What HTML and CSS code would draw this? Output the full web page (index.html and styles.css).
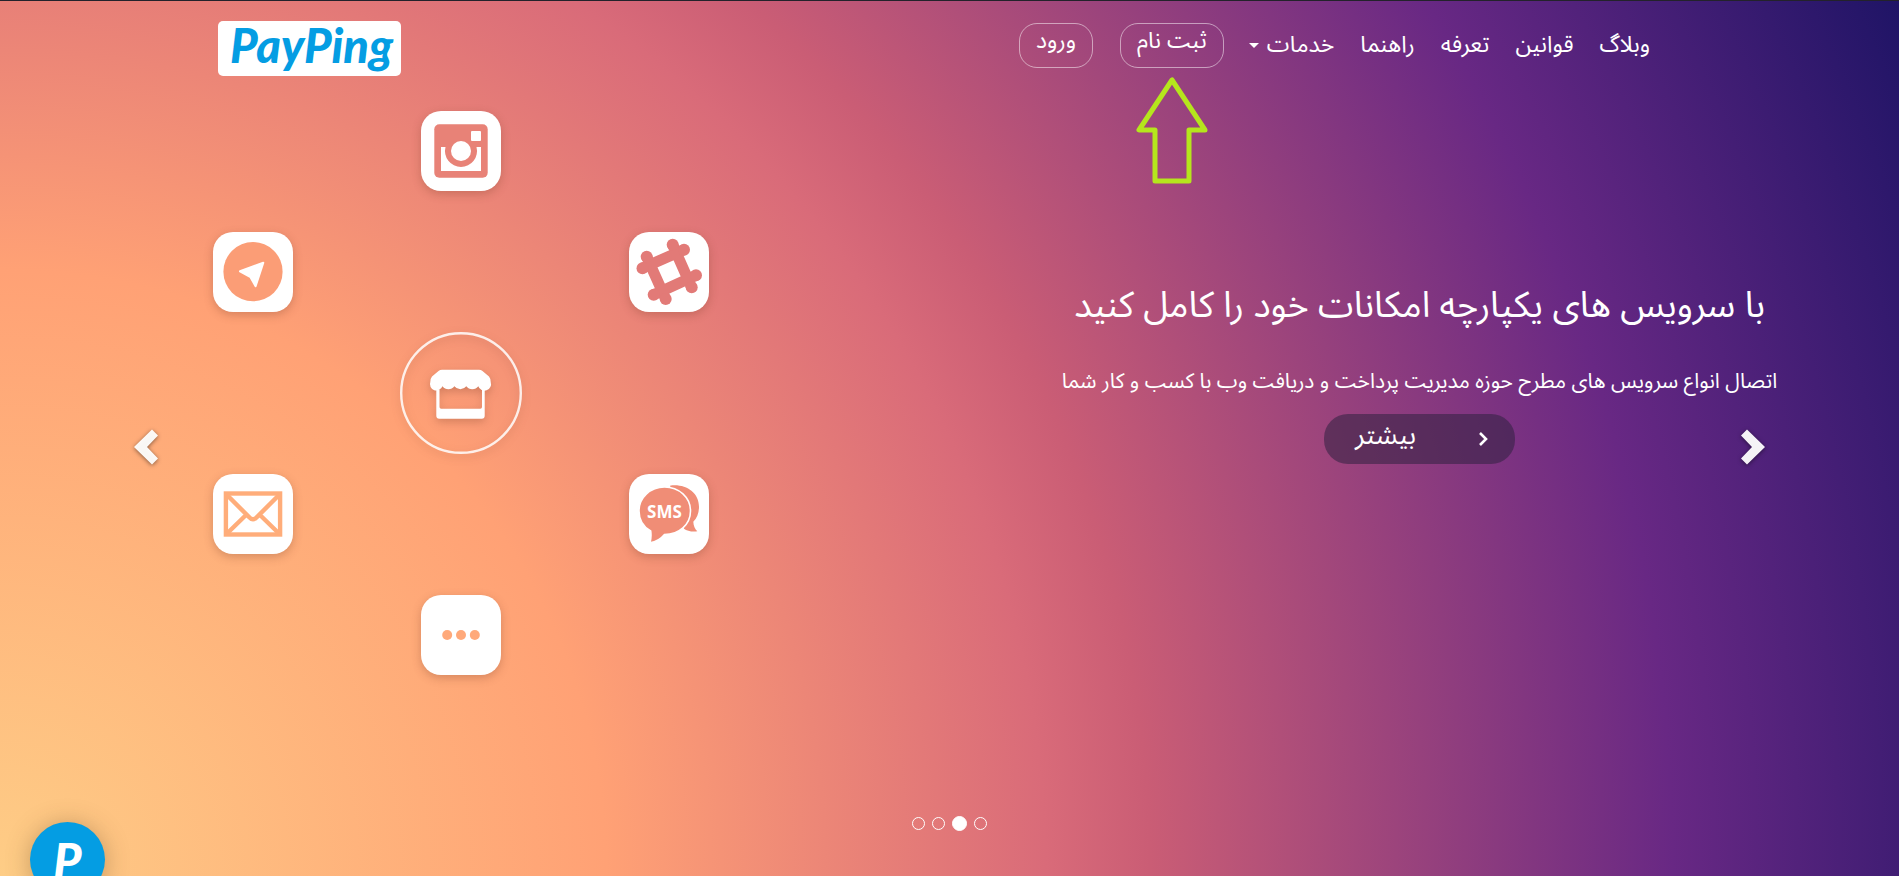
FILE: index.html
```html
<!DOCTYPE html>
<html lang="fa" dir="rtl">
<head>
<meta charset="utf-8">
<title>PayPing</title>
<link rel="stylesheet" href="styles.css">
</head>
<body>
<div class="page">
  <header class="header">
    <nav class="nav">
      <ul class="menu">
        <li><a href="#">وبلاگ</a></li>
        <li><a href="#">قوانین</a></li>
        <li><a href="#">تعرفه</a></li>
        <li><a href="#">راهنما</a></li>
        <li><a href="#" class="has-caret">خدمات<span class="caret"></span></a></li>
      </ul>
      <a href="#" class="pill register">ثبت نام
        <svg class="pointer" viewBox="0 0 72 108"><path d="M36 4L3 54H19V105H53V54H69Z" fill="none" stroke="#b5e61d" stroke-width="5" stroke-linejoin="round"/></svg>
      </a>
      <a href="#" class="pill">ورود</a>
    </nav>
    <a href="#" class="logo" dir="ltr">PayPing</a>
  </header>

  <main class="hero">
    <section class="copy">
      <h1>با سرویس های یکپارچه امکانات خود را کامل کنید</h1>
      <p>اتصال انواع سرویس های مطرح حوزه مدیریت پرداخت و دریافت وب با کسب و کار شما</p>
      <a href="#" class="more">
        <svg class="more-icon" viewBox="0 0 12 16"><path d="M3 2L9 8L3 14" fill="none" stroke="#fff" stroke-width="2.6"/></svg>
        <span>بیشتر</span>
      </a>
    </section>
    <section class="services">
      <div class="tile instagram">
        <svg viewBox="0 0 80 80"><rect x="13.3" y="13.3" width="53.4" height="53.4" rx="5" fill="#e88277"/><path d="M20 36H24.5A16 16 0 1 0 55.5 36H60V60H20Z" fill="#fff"/><circle cx="40" cy="40" r="10" fill="#fff"/><rect x="50" y="20" width="10" height="10" rx="1" fill="#fff"/></svg>
      </div>
      <div class="tile telegram">
        <svg viewBox="0 0 80 80"><circle cx="40" cy="39.7" r="29.6" fill="#fb9d76"/><path d="M27 39.3L50.3 30.7L42.6 54.3L37.5 45.2Z" fill="#fff" stroke="#fff" stroke-width="2" stroke-linejoin="round"/></svg>
      </div>
      <div class="tile slack">
        <svg viewBox="0 0 80 80"><g fill="none" stroke="#e27a77" stroke-width="11"><path d="M43.7 12.7L62.7 55.7M17.7 24.7L36.7 67M55 17.7L13 36.3M67.3 43.3L24.7 62.7"/></g><g fill="#e27a77"><circle cx="43.7" cy="12.7" r="6"/><circle cx="55" cy="17.7" r="6"/><circle cx="17.7" cy="24.7" r="6"/><circle cx="13.5" cy="36.3" r="6"/><circle cx="67" cy="43.3" r="6"/><circle cx="62.7" cy="55.3" r="6"/><circle cx="24.7" cy="62.7" r="6"/><circle cx="36.7" cy="67" r="6"/></g></svg>
      </div>
      <div class="shop">
        <svg viewBox="0 0 122 122"><circle cx="61" cy="61" r="59.8" fill="none" stroke="#fff" stroke-opacity=".85" stroke-width="2.4"/><path d="M42 37.7H79Q81 37.7 82.5 39L89 44.5Q90.7 46.5 90.7 50A6.4 6.4 0 0 1 78.3 54.2A7.5 7.5 0 0 1 66.3 54.2A7.5 7.5 0 0 1 54.4 54.2A7.5 7.5 0 0 1 42.4 54.2A6.4 6.4 0 0 1 30.3 50Q30.3 46.5 32 44.5L38.5 39Q40 37.7 42 37.7Z" fill="#fff"/><path d="M36.3 57.7H39.5V75Q39.5 76.7 41.2 76.7H80.3Q82 76.7 82 75V57.7H84.7V83.7Q84.7 86.7 81.7 86.7H39.3Q36.3 86.7 36.3 83.7Z" fill="#fff"/></svg>
      </div>
      <div class="tile mail">
        <svg viewBox="0 0 80 80"><g fill="none" stroke="#ffad7a" stroke-width="4.4"><rect x="12.9" y="19.5" width="54.2" height="41"/><path d="M14 21L36 43Q40 47.5 44 43L66 21M14 59.5L32.5 41.5M66 59.5L47.5 41.5"/></g></svg>
      </div>
      <div class="tile sms">
        <svg viewBox="0 0 80 80"><path d="M41 11.7C56 9.5 70 18 70 32.7C70 39 68 44 64.3 47.7C64.5 52 66 55 68.3 57.3C63 58 58 57 55 54.7Z" fill="#f08d76"/><path d="M35.5 13C50 13 61.5 23.5 61.5 37C61.5 50.5 50 60.6 35.5 60.6Q30 67.5 21 68.7Q22.5 63 21.7 57C14.5 53 10 46 10 37C10 23.5 21.5 13 35.5 13Z" fill="#f08d76" stroke="#fff" stroke-width="1.6"/><text x="35.5" y="43.5" text-anchor="middle" class="sms-label">SMS</text></svg>
      </div>
      <div class="tile dots">
        <svg viewBox="0 0 80 80"><g fill="#ffa97a"><circle cx="26.2" cy="40" r="5"/><circle cx="40" cy="40" r="5"/><circle cx="53.8" cy="40" r="5"/></g></svg>
      </div>
    </section>

    <button class="arrow arrow-left" aria-label="قبلی"><svg viewBox="0 0 24 36"><path d="M18 .5L24 6.5L13 18L24 29.5L18 35.5L0 18Z" fill="#fff" fill-opacity=".95"/></svg></button>
    <button class="arrow arrow-right" aria-label="بعدی"><svg viewBox="0 0 24 36"><path d="M6 .5L0 6.5L11 18L0 29.5L6 35.5L24 18Z" fill="#fff" fill-opacity=".95"/></svg></button>
  </main>

  <div class="indicators" dir="ltr">
    <button aria-label="1"></button>
    <button aria-label="2"></button>
    <button aria-label="3" class="active"></button>
    <button aria-label="4"></button>
  </div>

  <button class="chat" dir="ltr">P</button>
</div>
</body>
</html>
```

FILE: styles.css
```css
* { box-sizing: border-box; }

body {
  margin: 0;
  font-family: "Noto Sans Arabic", "Vazirmatn", "Vazir", "DejaVu Sans", sans-serif;
  color: #fff;
}

a { color: inherit; text-decoration: none; }
button { padding: 0; border: 0; background: none; color: inherit; cursor: pointer; }
svg { display: block; }

.page {
  position: relative;
  display: flex;
  flex-direction: column;
  min-height: 100vh;
  overflow: hidden;
  border-top: 1px solid #23222b;
  background: radial-gradient(circle farthest-corner at 0 100%, #fecd86 0%, #ffa175 29%, #d96b79 50%, #ca5d75 55%, #682884 80%, #1f1466 100%);
}

.header {
  display: flex;
  justify-content: space-between;
  align-items: flex-start;
  padding: 20px 249px 0 218px;
}

.nav { display: flex; align-items: flex-start; }

.menu {
  display: flex;
  gap: 26px;
  margin: 0;
  padding: 0;
  list-style: none;
  font-size: 23px;
  line-height: 48px;
}

.has-caret { display: flex; align-items: center; gap: 8px; }

.caret {
  border: 5px solid transparent;
  border-top-color: #fff;
  border-bottom: 0;
}

.pill {
  position: relative;
  height: 45px;
  margin: 2px 27px 0 0;
  padding: 0 16px;
  border: 1px solid rgba(255, 255, 255, .5);
  border-radius: 18px;
  font-size: 23px;
  line-height: 34px;
}

.pointer {
  position: absolute;
  top: 52px;
  left: 15px;
  width: 72px;
  height: 108px;
}

.logo {
  width: 183px;
  height: 55px;
  padding-left: 4px;
  border-radius: 5px;
  background: #fff;
  color: #049de3;
  font: italic 900 47px/48px Lato, sans-serif;
  text-align: center;
}

.hero {
  position: relative;
  display: grid;
  grid-template-columns: 959fr 922fr;
  gap: 18px;
  padding-top: 35px;
}

.copy {
  display: flex;
  flex-direction: column;
  align-items: center;
  padding-top: 165px;
  text-align: center;
}

.copy h1 { margin: 0; font-size: 36px; font-weight: 400; line-height: 60px; }
.copy p { margin: 30px 0 18px; font-size: 21px; line-height: 30px; }

.more {
  display: flex;
  align-items: center;
  justify-content: space-between;
  width: 191px;
  height: 50px;
  padding: 0 26px 0 31px;
  border-radius: 24px;
  background: rgba(48, 32, 64, .55);
  font-size: 27px;
}

.more span { padding-bottom: 6px; line-height: 36px; }

.more-icon { width: 12px; height: 16px; }

.services {
  direction: ltr;
  display: grid;
  grid-template-columns: repeat(3, 80px);
  grid-template-rows: repeat(5, 80px);
  gap: 41px 128px;
  justify-content: center;
}

.tile {
  border-radius: 20px;
  background: #fff;
  box-shadow: 0 3px 10px rgba(120, 60, 40, .3);
}

.instagram { grid-area: 1 / 2; }
.telegram { grid-area: 2 / 1; }
.slack { grid-area: 2 / 3; }
.shop { grid-area: 3 / 2; place-self: center; width: 122px; height: 122px; filter: drop-shadow(0 3px 4px rgba(120, 60, 40, .3)); }
.mail { grid-area: 4 / 1; }
.sms { grid-area: 4 / 3; }
.dots { grid-area: 5 / 2; }

.sms-label { fill: #fff; font: 700 17px "Open Sans", sans-serif; }

.arrow {
  position: absolute;
  top: 353px;
  width: 24px;
  height: 36px;
  filter: drop-shadow(0 1px 2px rgba(0, 0, 0, .5));
}

.arrow-left { left: 134px; }
.arrow-right { right: 134px; }

.indicators {
  display: flex;
  justify-content: center;
  align-items: center;
  gap: 7px;
  height: 16px;
  margin-top: auto;
  margin-bottom: 45px;
}

.indicators button {
  width: 13px;
  height: 13px;
  border: 1px solid #fff;
  border-radius: 50%;
}

.indicators .active { width: 15px; height: 15px; background: #fff; }

.chat {
  position: absolute;
  left: 30px;
  bottom: -21px;
  width: 75px;
  height: 75px;
  border-radius: 50%;
  background: #049de3;
  box-shadow: 0 2px 24px rgba(90, 60, 30, .35);
  font: italic 900 48px/75px Lato, sans-serif;
}

.register { margin-right: 25px; }
```
